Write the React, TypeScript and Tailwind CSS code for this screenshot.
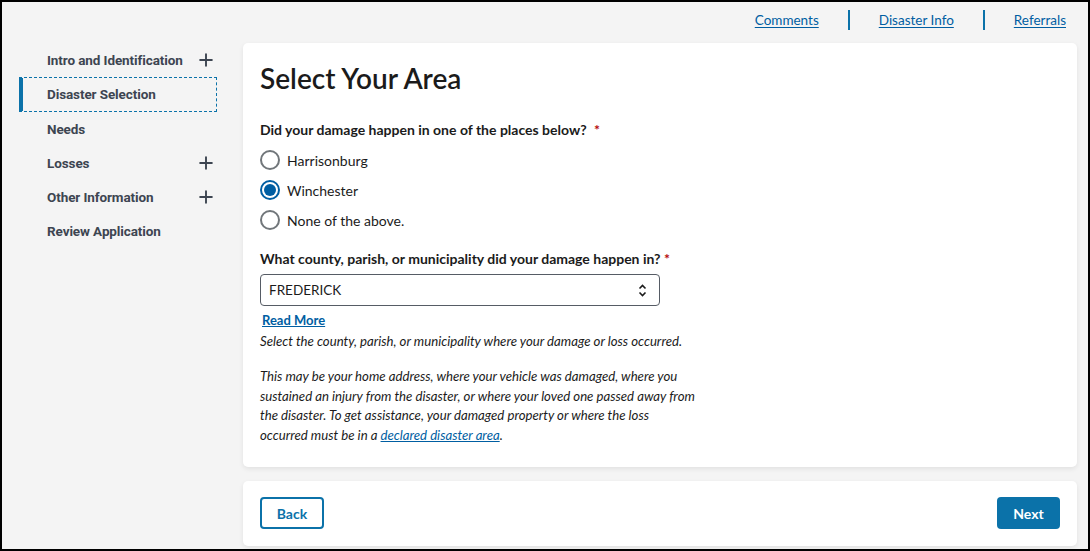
import { Plus } from "lucide-react";

const sans = "font-['Lato','Noto_Sans',sans-serif]";

const navItems = [
  { title: "Intro and Identification", expandable: true },
  { title: "Disaster Selection", active: true },
  { title: "Needs" },
  { title: "Losses", expandable: true },
  { title: "Other Information", expandable: true },
  { title: "Review Application" },
];

function Radio({ label, checked }: { label: string; checked?: boolean }) {
  return (
    <label className="flex h-[30px] items-center gap-[7px]">
      {checked ? (
        <span className="flex h-5 w-5 items-center justify-center rounded-full border-2 border-[#005ea2] bg-white">
          <span className="h-3 w-3 rounded-full bg-[#005ea2]" />
        </span>
      ) : (
        <span className="h-5 w-5 rounded-full border-2 border-[#71767a] bg-white" />
      )}
      <span className="text-[14px] text-[#1b1b1b]">{label}</span>
    </label>
  );
}

export default function App() {
  return (
    <div className={`flex h-[551px] w-[1090px] flex-col border-2 border-black bg-[#f4f4f4] ${sans}`}>
      <header className="flex h-[41px] shrink-0 items-center justify-end pb-[5px] pr-[22px] text-[13.5px]">
        <a href="#" className="text-[#005ea2] underline underline-offset-2">Comments</a>
        <span className="mx-[29px] h-5 w-[2px] bg-[#0b72a9]" />
        <a href="#" className="text-[#005ea2] underline underline-offset-2">Disaster Info</a>
        <span className="mx-[29px] h-5 w-[2px] bg-[#0b72a9]" />
        <a href="#" className="text-[#005ea2] underline underline-offset-2">Referrals</a>
      </header>

      <div className="flex min-h-0 flex-1">
        <aside className="w-[241px] shrink-0 pl-[17px] pr-[26px] font-['Roboto',sans-serif]">
          <nav className="flex flex-col">
            {navItems.map((item) => (
              <div
                key={item.title}
                className={
                  item.active
                    ? "flex h-[35px] items-center justify-between border border-l-4 border-dashed border-[#0b72a9] pl-[24px]"
                    : "flex h-[34px] items-center justify-between border border-l-4 border-transparent pl-[24px]"
                }
                style={item.active ? { borderLeftStyle: "solid" } : undefined}
              >
                <span className="text-[13.5px] font-bold tracking-[-0.1px] text-[#3d4551]">
                  {item.title}
                </span>
                {item.expandable ? <Plus className="h-5 w-5 text-[#3d4551]" strokeWidth={2.3} /> : null}
              </div>
            ))}
          </nav>
        </aside>

        <main className="flex min-w-0 flex-1 flex-col gap-[14px] pb-[3px] pr-[11px]">
          <section className="shrink-0 rounded-[5px] bg-white px-[17px] pb-[21px] pt-[17px] shadow-[0_2px_5px_rgba(0,0,0,0.08)]">
            <h1 className="text-[28px] font-semibold leading-9 text-[#1b1b1b]">Select Your Area</h1>

            <p className="mt-[23px] text-[14px] font-bold text-[#1b1b1b]">
              Did your damage happen in one of the places below? <span className="ml-1 text-[#b50909]">*</span>
            </p>
            <div className="mt-[5px] flex flex-col">
              <Radio label="Harrisonburg" />
              <Radio label="Winchester" checked />
              <Radio label="None of the above." />
            </div>

            <p className="mt-[13px] text-[14px] font-bold text-[#1b1b1b]">
              What county, parish, or municipality did your damage happen in? <span className="text-[#b50909]">*</span>
            </p>
            <div className="mt-[5px] flex h-[32px] w-[400px] items-center justify-between rounded-[4px] border border-[#565c65] pl-2 pr-3 text-[13.5px] text-[#1b1b1b]">
              <span>FREDERICK</span>
              <svg width="9" height="13" viewBox="0 0 9 13" fill="none" stroke="#1b1b1b" strokeWidth="1.6">
                <path d="M1.5 4.5 4.5 1.5 7.5 4.5" />
                <path d="M1.5 8.5 4.5 11.5 7.5 8.5" />
              </svg>
            </div>
            <a href="#" className="mt-[5px] inline-block px-[2px] text-[13px] font-bold text-[#005ea2] underline">Read More</a>
            <p className="text-[13.2px] italic leading-5 text-[#1b1b1b]">
              Select the county, parish, or municipality where your damage or loss occurred.
            </p>
            <p className="mt-[16px] text-[13.2px] italic leading-[19.7px] text-[#1b1b1b]">
              This may be your home address, where your vehicle was damaged, where you
              <br />
              sustained an injury from the disaster, or where your loved one passed away from
              <br />
              the disaster. To get assistance, your damaged property or where the loss
              <br />
              occurred must be in a <a href="#" className="text-[#005ea2] underline">declared disaster area</a>.
            </p>
          </section>

          <section className="flex h-[65px] shrink-0 items-center justify-between rounded-[5px] bg-white px-[17px] shadow-[0_2px_5px_rgba(0,0,0,0.08)]">
            <button className="h-8 w-16 rounded-[4px] border-2 border-[#0b72a9] bg-white text-[14px] font-bold text-[#0b72a9]">
              Back
            </button>
            <button className="h-8 w-[63px] rounded-[4px] bg-[#0b72a9] text-[14px] font-bold text-white">
              Next
            </button>
          </section>
        </main>
      </div>
    </div>
  );
}
